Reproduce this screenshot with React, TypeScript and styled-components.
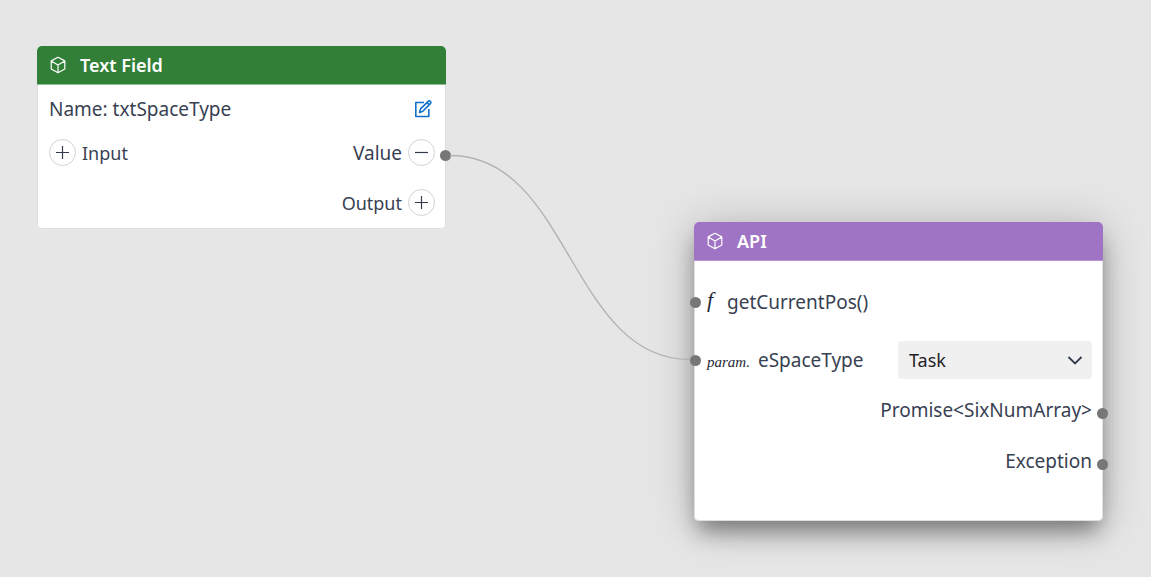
import React from "react";
import styled, { createGlobalStyle } from "styled-components";

const GlobalStyle = createGlobalStyle`
  *, *::before, *::after { box-sizing: border-box; }
  body { margin: 0; background: #e6e6e6; }
`;

const Canvas = styled.main`
  position: relative;
  min-height: 100vh;
  overflow: hidden;
  background: #e6e6e6;
  color: #384152;
  font-family: "Noto Sans", sans-serif;
  font-size: 19px;
  line-height: 26px;
`;

const Wires = styled.svg`
  position: absolute;
  inset: 0;
  width: 100%;
  height: 100%;
  pointer-events: none;
`;

const NodeCard = styled.section<{ $x: number; $y: number; $raised?: boolean }>`
  position: absolute;
  left: ${(p) => p.$x}px;
  top: ${(p) => p.$y}px;
  width: 409px;
  border-radius: 5px;
  background: #fff;
  box-shadow: ${(p) =>
    p.$raised
      ? "0 14px 22px -4px rgba(0, 0, 0, 0.4), 0 4px 46px rgba(0, 0, 0, 0.22)"
      : "none"};
`;

const NodeHeader = styled.header<{ $color: string; $line: string }>`
  display: flex;
  align-items: center;
  gap: 13px;
  height: 39px;
  padding: 0 12px;
  border-bottom: 1px solid ${(p) => p.$line};
  border-radius: 5px 5px 0 0;
  background: ${(p) => p.$color};
  color: #fff;
`;

const NodeTitle = styled.h2`
  margin: 0;
  font-size: 18px;
  font-weight: 600;
  line-height: 26px;
`;

const NodeBody = styled.div<{ $top: number; $bottom: number }>`
  padding: ${(p) => p.$top}px 0 ${(p) => p.$bottom}px;
  border: 1px solid #dcdfe4;
  border-top: 0;
  border-radius: 0 0 5px 5px;
`;

const Row = styled.div<{ $gap?: number; $end?: boolean }>`
  position: relative;
  display: flex;
  align-items: center;
  justify-content: ${(p) => (p.$end ? "flex-end" : "space-between")};
  height: 38px;
  margin-top: ${(p) => p.$gap ?? 0}px;
  padding: 0 10px 0 11px;
`;

const PortLabel = styled.div`
  display: flex;
  align-items: center;
  gap: 6px;
`;

const PortName = styled.span<{ $open?: boolean }>`
  padding-top: 2px;
  font-size: ${(p) => (p.$open ? 18 : 19)}px;
`;

const IconButton = styled.button`
  display: grid;
  place-items: center;
  width: 24px;
  height: 24px;
  padding: 0;
  border: 0;
  background: none;
  color: #1070ca;
  cursor: pointer;
`;

const RoundButton = styled.button`
  display: grid;
  place-items: center;
  width: 27px;
  height: 27px;
  padding: 0;
  border: 1px solid #ced4da;
  border-radius: 50%;
  background: #fff;
  color: #323b4b;
  cursor: pointer;
`;

const Port = styled.span<{ $side: "left" | "right"; $low?: boolean }>`
  position: absolute;
  ${(p) => (p.$side === "left" ? "left: -5px" : "right: -6px")};
  top: ${(p) => (p.$low ? 17 : 14)}px;
  width: 11px;
  height: 11px;
  border-radius: 50%;
  background: #777;
`;

const FunctionLabel = styled.div`
  display: flex;
  align-items: center;
  gap: 8px;
  padding-left: 1px;
`;

const FunctionGlyph = styled.i`
  width: 12px;
  padding-bottom: 4px;
  color: #1f2937;
  font-family: "Liberation Serif", serif;
  font-size: 22px;
`;

const ParamGlyph = styled.i`
  padding-top: 4px;
  color: #1f2937;
  font-family: "Liberation Serif", serif;
  font-size: 15px;
`;

const SelectBox = styled.div`
  position: relative;
  width: 194px;

  svg {
    position: absolute;
    right: 9px;
    top: 11px;
    pointer-events: none;
  }
`;

const Select = styled.select`
  display: block;
  width: 100%;
  height: 38px;
  padding: 0 30px 0 11px;
  border: 0;
  border-radius: 4px;
  appearance: none;
  background: #f0f0f0;
  color: #222;
  font: inherit;
  font-size: 18px;
`;

const CubeIcon = () => (
  <svg width="18" height="18" viewBox="0 0 18 18" fill="none" stroke="currentColor" strokeWidth="1.2" strokeLinejoin="round" aria-hidden="true">
    <path d="M9 1.2 15.8 4.9V13L9 16.8 2.2 13V4.9Z M2.2 4.9 9 8.9l6.8-4M9 8.9v7.9" />
  </svg>
);

const EditIcon = () => (
  <svg width="18" height="18" viewBox="0 0 18 18" fill="none" stroke="currentColor" strokeWidth="1.6" strokeLinejoin="round" aria-hidden="true">
    <path d="M10 2.5H1.8v14h13V9" />
    <path d="m5.6 12.4.9-3.5 7.7-7.5c.7-.6 1.6-.5 2.2 0 .6.7.6 1.5 0 2.2l-7.6 7.7ZM13 2.6l2.2 2.2" />
  </svg>
);

const SignIcon = ({ plus }: { plus?: boolean }) => (
  <svg width="13" height="13" viewBox="0 0 13 13" fill="none" stroke="currentColor" strokeWidth="1.2" aria-hidden="true">
    <path d={plus ? "M0 6.5h13M6.5 0v13" : "M0 6.5h13"} />
  </svg>
);

const Chevron = () => (
  <svg width="16" height="16" viewBox="0 0 16 16" fill="none" stroke="#323b4b" strokeWidth="1.8" aria-hidden="true">
    <path d="m1.5 5 6.5 6.5L14.5 5" />
  </svg>
);

export default function App() {
  return (
    <>
      <GlobalStyle />
      <Canvas>
        <NodeCard $x={37} $y={46}>
          <NodeHeader $color="#327f38" $line="#8fbb93">
            <CubeIcon />
            <NodeTitle>Text Field</NodeTitle>
          </NodeHeader>
          <NodeBody $top={5} $bottom={7}>
            <Row>
              <span>Name: txtSpaceType</span>
              <IconButton type="button" aria-label="Edit name">
                <EditIcon />
              </IconButton>
            </Row>
            <Row $gap={5}>
              <PortLabel>
                <RoundButton type="button" aria-label="Add input">
                  <SignIcon plus />
                </RoundButton>
                <PortName $open>Input</PortName>
              </PortLabel>
              <PortLabel>
                <PortName>Value</PortName>
                <RoundButton type="button" aria-label="Remove value">
                  <SignIcon />
                </RoundButton>
              </PortLabel>
              <Port $side="right" $low />
            </Row>
            <Row $gap={12} $end>
              <PortLabel>
                <PortName $open>Output</PortName>
                <RoundButton type="button" aria-label="Add output">
                  <SignIcon plus />
                </RoundButton>
              </PortLabel>
            </Row>
          </NodeBody>
        </NodeCard>

        <NodeCard $x={694} $y={222} $raised>
          <NodeHeader $color="#a074c4" $line="#b795d4">
            <CubeIcon />
            <NodeTitle>API</NodeTitle>
          </NodeHeader>
          <NodeBody $top={22} $bottom={40}>
            <Row>
              <FunctionLabel>
                <FunctionGlyph>f</FunctionGlyph>
                <span>getCurrentPos()</span>
              </FunctionLabel>
              <Port $side="left" />
            </Row>
            <Row $gap={20}>
              <FunctionLabel as="label" htmlFor="space-type">
                <ParamGlyph>param.</ParamGlyph>
                <span>eSpaceType</span>
              </FunctionLabel>
              <SelectBox>
                <Select id="space-type" defaultValue="Task">
                  <option>Task</option>
                </Select>
                <Chevron />
              </SelectBox>
              <Port $side="left" />
            </Row>
            <Row $gap={12} $end>
              <span>Promise&lt;SixNumArray&gt;</span>
              <Port $side="right" $low />
            </Row>
            <Row $gap={13} $end>
              <span>Exception</span>
              <Port $side="right" $low />
            </Row>
          </NodeBody>
        </NodeCard>

        <Wires fill="none" stroke="#b1b1b7" strokeWidth="1.4" aria-hidden="true">
          <path d="M450 155.500C570 155.500 570 359.500 690 359.500" />
        </Wires>
      </Canvas>
    </>
  );
}
